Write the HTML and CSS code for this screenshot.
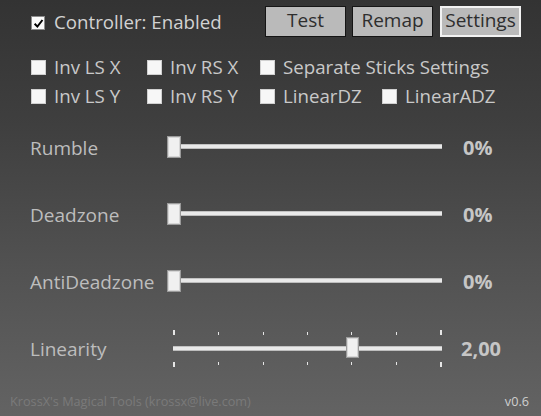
FILE: index.html
```html
<!DOCTYPE html>
<html>
<head>
<meta charset="utf-8">
<link rel="stylesheet" href="styles.css">
</head>
<body>
<div class="app">
  <div class="header">
    <label class="check main"><span class="box checked"><svg viewBox="0 0 10 10" width="11" height="11"><path d="M1.5 5.2 L4 7.8 L8.6 1.8" fill="none" stroke="#000" stroke-width="1.8"/></svg></span><span>Controller: Enabled</span></label>
    <div class="buttons">
      <button class="btn">Test</button>
      <button class="btn">Remap</button>
      <button class="btn active">Settings</button>
    </div>
  </div>
  <div class="opts">
    <div class="optrow">
      <label class="check c1"><span class="box"></span><span>Inv LS X</span></label>
      <label class="check c2"><span class="box"></span><span>Inv RS X</span></label>
      <label class="check"><span class="box"></span><span>Separate Sticks Settings</span></label>
    </div>
    <div class="optrow">
      <label class="check c1"><span class="box"></span><span>Inv LS Y</span></label>
      <label class="check c2"><span class="box"></span><span>Inv RS Y</span></label>
      <label class="check c3"><span class="box"></span><span>LinearDZ</span></label>
      <label class="check"><span class="box"></span><span>LinearADZ</span></label>
    </div>
  </div>
  <div class="sliders">
    <div class="srow">
      <span class="label">Rumble</span>
      <div class="slider"><div class="track"></div><div class="thumb" style="left:0px"></div></div>
      <span class="value">0%</span>
    </div>
    <div class="srow">
      <span class="label">Deadzone</span>
      <div class="slider"><div class="track"></div><div class="thumb" style="left:0px"></div></div>
      <span class="value">0%</span>
    </div>
    <div class="srow">
      <span class="label">AntiDeadzone</span>
      <div class="slider"><div class="track"></div><div class="thumb" style="left:0px"></div></div>
      <span class="value">0%</span>
    </div>
    <div class="srow">
      <span class="label">Linearity</span>
      <div class="slider lin">
        <div class="ticks top"><i class="end"></i><i></i><i></i><i></i><i></i><i></i><i class="end"></i></div>
        <div class="track"></div>
        <div class="ticks bottom"><i class="end"></i><i></i><i></i><i></i><i></i><i></i><i class="end"></i></div>
        <div class="thumb small" style="left:179px"></div>
      </div>
      <span class="value">2,00</span>
    </div>
  </div>
  <div class="footer">
    <span class="credit">KrossX's Magical Tools (krossx@live.com)</span>
    <span class="ver">v0.6</span>
  </div>
</div>
</body>
</html>
```
FILE: styles.css
```css
html, body {
  margin: 0;
  padding: 0;
}
body {
  width: 541px;
  height: 416px;
  overflow: hidden;
  background: linear-gradient(to bottom, #333333 0%, #3f3f3f 30%, #525252 65%, #636363 100%);
  font-family: "Open Sans", "Noto Sans", sans-serif;
  color: #c8c8c8;
}
.app {
  height: 416px;
  display: flex;
  flex-direction: column;
}
.header {
  display: flex;
  align-items: center;
  padding: 6px 20px 0 31px;
  height: 31px;
}
.buttons {
  margin-left: auto;
  display: flex;
  gap: 6px;
}
.btn {
  width: 81px;
  height: 31px;
  box-sizing: border-box;
  background: #bababa;
  border: 1px solid #151515;
  font-family: inherit;
  font-size: 19px;
  color: #2e2e2e;
  padding: 0 0 2px;
  margin: 0;
  line-height: 1;
}
.btn.active {
  border: 2px solid #f2f2f2;
  margin-left: 1px;
}
.check {
  display: flex;
  align-items: center;
  font-size: 18.7px;
  color: #c9c9c9;
  white-space: nowrap;
}
.check .box {
  width: 15px;
  height: 15px;
  box-sizing: border-box;
  background: #f7f7f7;
  border: 1px solid #d0d0d0;
  margin-right: 8px;
  display: flex;
  align-items: center;
  justify-content: center;
  flex: none;
}
.check .box.checked {
  width: 14px;
  height: 14px;
  border: 1px solid #8c8c8c;
  background: #fbfbfb;
}
.main {
  margin-top: 3px;
  color: #d2d2d2;
}
.main .box {
  margin-right: 9px;
}
.main .box + span {
  margin-top: -4px;
}
.opts {
  padding: 19px 0 0 31px;
  display: flex;
  flex-direction: column;
  gap: 7px;
}
.optrow {
  display: flex;
  height: 22px;
}
.optrow .box + span {
  margin-top: -2px;
}
.c1 { width: 116px; }
.c2 { width: 113px; }
.c3 { width: 122px; }
.sliders {
  padding: 26px 0 0 30px;
  display: flex;
  flex-direction: column;
  gap: 45px;
}
.srow {
  display: grid;
  grid-template-columns: 137px 275px auto;
  align-items: center;
  height: 22px;
}
.label {
  font-size: 19px;
  color: #bdbdbd;
  margin-top: 1px;
}
.value {
  font-weight: bold;
  font-size: 20px;
  color: #c6c6c6;
  padding-left: 21px;
  margin-top: 1px;
}
.lin + .value {
  padding-left: 19px;
}
.slider {
  position: relative;
  height: 22px;
}
.track {
  position: absolute;
  left: 6px;
  right: 0;
  top: 8px;
  height: 5px;
  box-sizing: border-box;
  background: #e9e9e9;
  border-top: 1px solid #c2c2c2;
  border-bottom: 1px solid #bdbdbd;
}
.thumb {
  position: absolute;
  top: 0;
  width: 14px;
  height: 22px;
  box-sizing: border-box;
  background: #f0f0f0;
  border: 1px solid #9a9a9a;
  box-shadow: inset 0 0 0 1px #d6d6d6;
}
.lin .track {
  left: 6px;
  top: 9px;
}
.thumb.small {
  width: 13px;
  height: 21px;
  top: 0;
}
.ticks {
  position: absolute;
  left: 6px;
  right: 0;
  display: flex;
  justify-content: space-between;
}
.ticks i {
  display: block;
  width: 1px;
  height: 3px;
  background: #e6e6e6;
}
.ticks i.end {
  height: 5px;
  width: 2px;
}
.ticks.top {
  top: -7px;
  align-items: flex-end;
}
.ticks.bottom {
  top: 25px;
  align-items: flex-start;
}
.footer {
  margin-top: auto;
  display: flex;
  align-items: center;
  justify-content: space-between;
  padding: 0 12px 6px 10px;
  font-size: 12.7px;
}
.credit {
  color: #7a7a7a;
}
.ver {
  color: #cfcfcf;
}
```
